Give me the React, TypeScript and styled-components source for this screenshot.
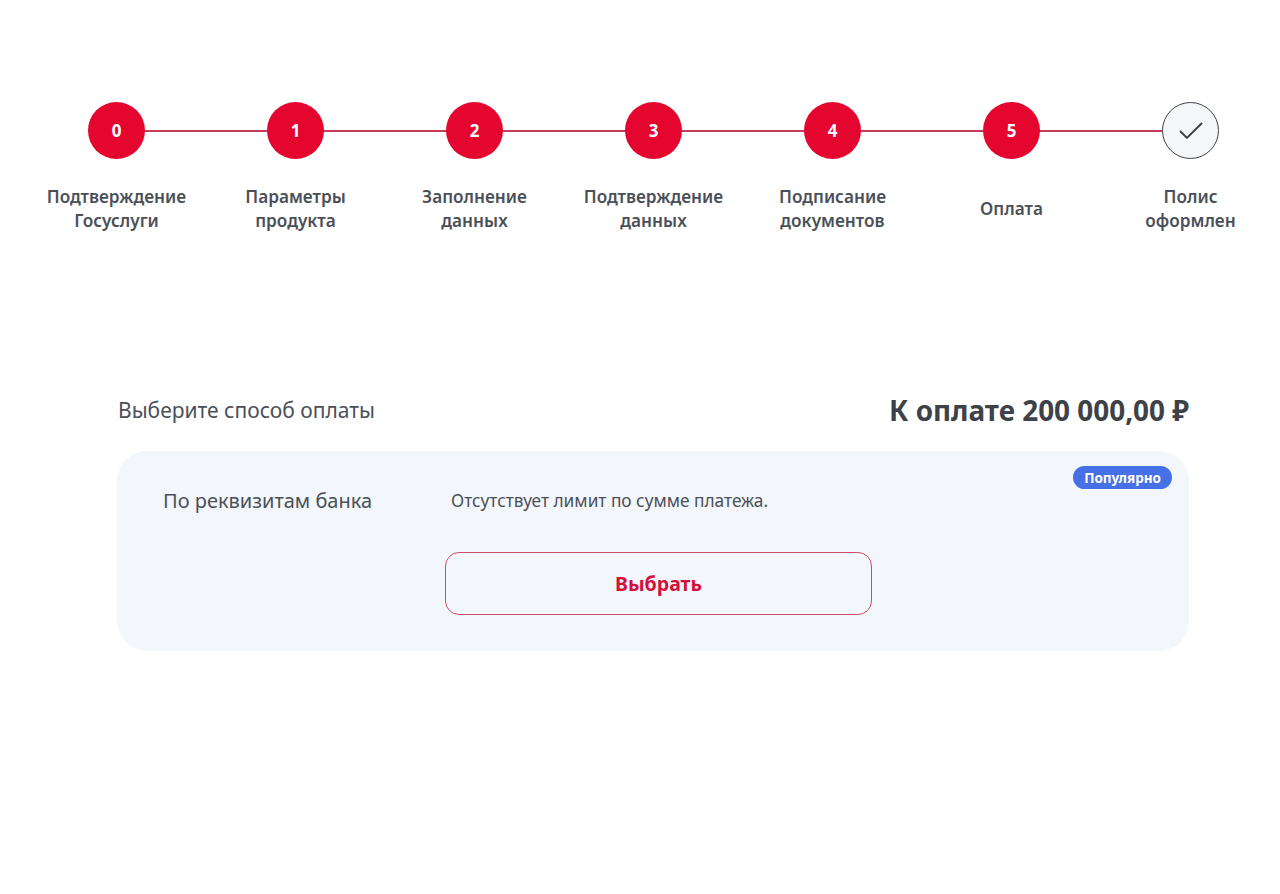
import React from "react";
import styled, { createGlobalStyle } from "styled-components";

const GlobalStyle = createGlobalStyle`
  html, body { margin: 0; padding: 0; background: #ffffff; }
  body { font-family: "Noto Sans", "Open Sans", Arial, sans-serif; color: #4b5058; }
  * { box-sizing: border-box; }
`;

const Page = styled.div`
  width: 1280px;
  min-height: 894px;
  padding-top: 102px;
`;

const Stepper = styled.ol`
  list-style: none;
  margin: 0;
  padding: 0 0 0 27px;
  display: grid;
  grid-template-columns: repeat(7, 179px);
`;

const Step = styled.li`
  display: flex;
  flex-direction: column;
  align-items: center;
`;

const CircleWrap = styled.div<{ $last?: boolean }>`
  position: relative;
  width: 100%;
  display: flex;
  justify-content: center;
  &::after {
    content: "";
    display: ${(p) => (p.$last ? "none" : "block")};
    position: absolute;
    left: 50%;
    width: 100%;
    top: 50%;
    height: 2px;
    margin-top: -1px;
    background: #c23b5d;
    z-index: 0;
  }
`;

const Circle = styled.div<{ $done?: boolean }>`
  position: relative;
  z-index: 1;
  width: 57px;
  height: 57px;
  border-radius: 50%;
  display: flex;
  align-items: center;
  justify-content: center;
  background: ${(p) => (p.$done ? "#f5f6f8" : "#e5062f")};
  border: ${(p) => (p.$done ? "1px solid #3f4348" : "none")};
  color: #ffffff;
  font-weight: 700;
  font-size: 17px;
`;

const StepLabel = styled.div`
  margin-top: 26px;
  height: 48px;
  display: flex;
  align-items: center;
  text-align: center;
  font-size: 17.2px;
  line-height: 24px;
  font-weight: 600;
  color: #4b5058;
  white-space: nowrap;
`;

const Payment = styled.section`
  margin: 160px 0 0 117px;
  width: 1072px;
`;

const PaymentHeader = styled.div`
  display: flex;
  justify-content: space-between;
  align-items: center;
  padding-left: 1px;
  height: 34px;
`;

const Title = styled.h2`
  margin: 0;
  font-size: 21px;
  font-weight: 400;
  color: #4b5058;
`;

const Amount = styled.div`
  font-size: 27.9px;
  font-weight: 700;
  color: #3d4249;
`;

const Card = styled.div`
  position: relative;
  margin-top: 24px;
  height: 200px;
  background: #f3f6fa;
  border-radius: 30px;
  padding: 38px 0 0 46px;
  display: grid;
  grid-template-columns: 282px 427px;
  grid-template-rows: 24px auto;
  row-gap: 39px;
`;

const MethodName = styled.div`
  font-size: 20px;
  line-height: 24px;
  color: #4b5058;
  white-space: nowrap;
`;

const Description = styled.div`
  padding-left: 6px;
  font-size: 17.3px;
  line-height: 24px;
  color: #4b5058;
  white-space: nowrap;
`;

const SelectButton = styled.button`
  grid-column: 2;
  height: 63px;
  border: 1px solid #cf4b6a;
  border-radius: 14px;
  background: transparent;
  font-family: inherit;
  font-size: 19.5px;
  font-weight: 700;
  color: #d4103c;
  cursor: pointer;
`;

const Badge = styled.span`
  position: absolute;
  top: 15px;
  right: 17px;
  height: 23px;
  padding: 0 11px;
  border-radius: 12px;
  background: #4670e6;
  color: #ffffff;
  font-size: 13.5px;
  font-weight: 700;
  display: flex;
  align-items: center;
`;

const CheckIcon = () => (
  <svg width="36" height="36" viewBox="0 0 24 24" fill="none" stroke="#3a3e44" strokeWidth="1.3" strokeLinecap="round" strokeLinejoin="round">
    <path d="M5 12.3l4.3 4.3L19 7" />
  </svg>
);

const steps = [
  "Подтверждение\nГосуслуги",
  "Параметры\nпродукта",
  "Заполнение\nданных",
  "Подтверждение\nданных",
  "Подписание\nдокументов",
  "Оплата",
  "Полис\nоформлен",
];

export default function App() {
  return (
    <Page>
      <GlobalStyle />
      <Stepper>
        {steps.map((label, i) => {
          const last = i === steps.length - 1;
          return (
            <Step key={i}>
              <CircleWrap $last={last}>
                <Circle $done={last}>{last ? <CheckIcon /> : i}</Circle>
              </CircleWrap>
              <StepLabel>
                <span>
                  {label.split("\n").map((l, j) => (
                    <React.Fragment key={j}>
                      {j > 0 && <br />}
                      {l}
                    </React.Fragment>
                  ))}
                </span>
              </StepLabel>
            </Step>
          );
        })}
      </Stepper>
      <Payment>
        <PaymentHeader>
          <Title>Выберите способ оплаты</Title>
          <Amount>К оплате 200 000,00 ₽</Amount>
        </PaymentHeader>
        <Card>
          <Badge>Популярно</Badge>
          <MethodName>По реквизитам банка</MethodName>
          <Description>Отсутствует лимит по сумме платежа.</Description>
          <SelectButton>Выбрать</SelectButton>
        </Card>
      </Payment>
    </Page>
  );
}
